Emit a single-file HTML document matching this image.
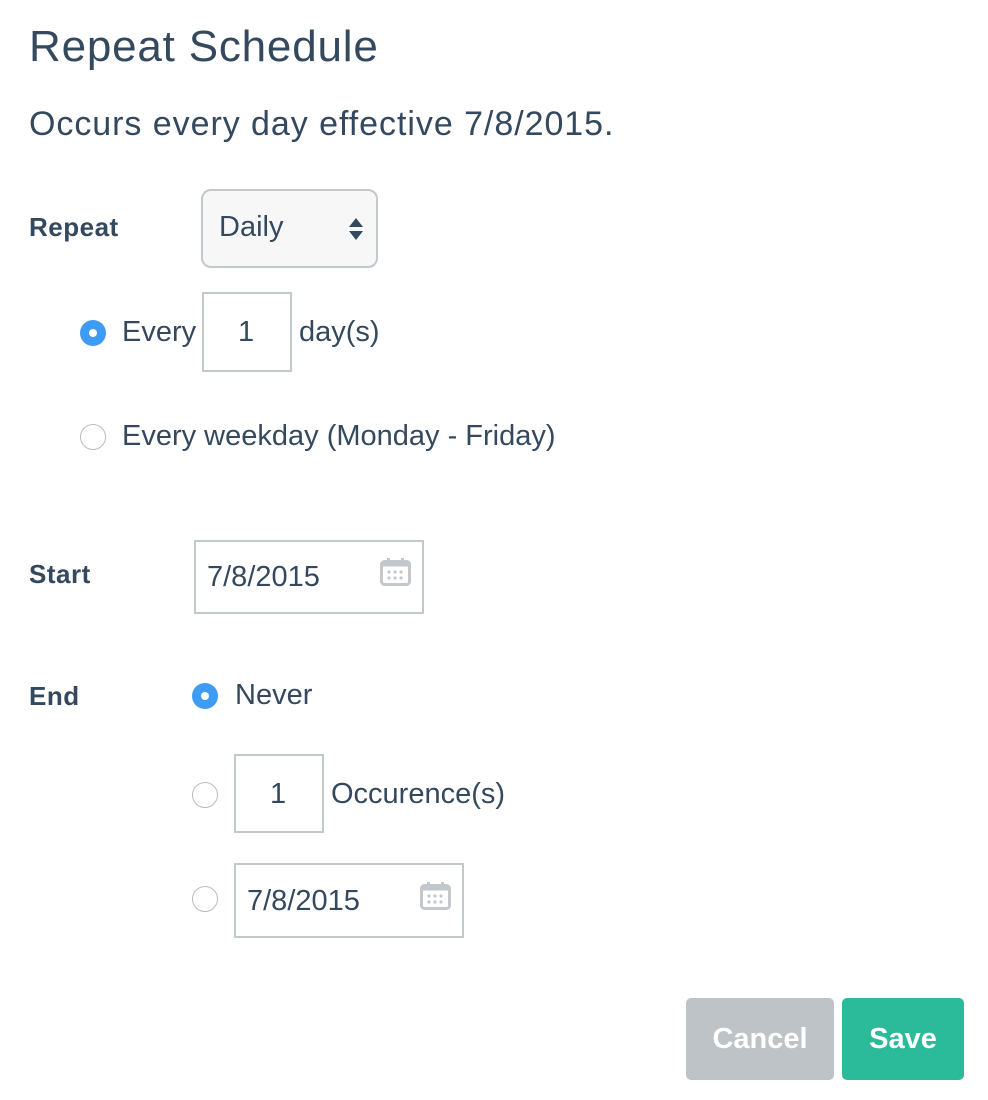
<!DOCTYPE html>
<html><head><style>
body{margin:0;width:988px;height:1100px;background:#fff;font-family:"Liberation Sans",sans-serif;color:#34495e;position:relative;overflow:hidden}
.a{position:absolute;white-space:nowrap}
.t{font-size:29px;line-height:1}
.b{font-weight:bold;font-size:26px;line-height:1;letter-spacing:0.5px}
.box{position:absolute;border:2px solid #c3c8cd;box-sizing:border-box;background:#fff}
.r{position:absolute;width:26px;height:26px;border-radius:50%;box-sizing:border-box;border:1px solid #b8bcc0;background:#fff}
.r.on{background:#3f9cf4;border:none}
.r.on:after{content:"";position:absolute;left:9px;top:9px;width:8px;height:8px;border-radius:50%;background:#fff}
.btn{position:absolute;border-radius:5px;color:#fff;font-weight:bold;font-size:29px;text-align:center}
</style></head><body>
<div class="a" style="left:29px;top:25px;font-size:44px;line-height:1;letter-spacing:0.8px">Repeat Schedule</div>
<div class="a" style="left:29px;top:107px;font-size:34px;line-height:1;letter-spacing:0.95px">Occurs every day effective 7/8/2015.</div>

<div class="a b" style="left:29px;top:214px">Repeat</div>
<div class="box" style="left:201px;top:189px;width:177px;height:79px;border-radius:10px;background:#f7f7f7"></div>
<div class="a t" style="left:219px;top:213px">Daily</div>
<svg class="a" style="left:348px;top:218px" width="16" height="24"><path d="M8 0L15 9H1Z M1 13H15L8 22Z" fill="#34495e"/></svg>

<div class="r on" style="left:80px;top:320px"></div>
<div class="a t" style="left:122px;top:318px">Every</div>
<div class="box" style="left:202px;top:292px;width:90px;height:80px"></div>
<div class="a t" style="left:238px;top:318px">1</div>
<div class="a t" style="left:299px;top:318px">day(s)</div>

<div class="r" style="left:80px;top:424px"></div>
<div class="a t" style="left:122px;top:422px">Every weekday (Monday - Friday)</div>

<div class="a b" style="left:29px;top:561px">Start</div>
<div class="box" style="left:194px;top:540px;width:230px;height:74px"></div>
<div class="a t" style="left:207px;top:563px">7/8/2015</div>
<svg class="a" style="left:380px;top:558px" width="31" height="28"><rect x="1.5" y="3.5" width="28" height="23" rx="3" fill="none" stroke="#c3c8cd" stroke-width="3"/><rect x="1.5" y="3.5" width="28" height="5" fill="#c3c8cd"/><rect x="7" y="0" width="3" height="6" fill="#c3c8cd"/><rect x="21" y="0" width="3" height="6" fill="#c3c8cd"/><g fill="#c3c8cd"><circle cx="9" cy="14" r="1.6"/><circle cx="15" cy="14" r="1.6"/><circle cx="21" cy="14" r="1.6"/><circle cx="9" cy="20" r="1.6"/><circle cx="15" cy="20" r="1.6"/><circle cx="21" cy="20" r="1.6"/></g></svg>

<div class="a b" style="left:29px;top:683px">End</div>
<div class="r on" style="left:192px;top:683px"></div>
<div class="a t" style="left:235px;top:681px">Never</div>

<div class="r" style="left:192px;top:782px"></div>
<div class="box" style="left:234px;top:754px;width:90px;height:79px"></div>
<div class="a t" style="left:270px;top:780px">1</div>
<div class="a t" style="left:331px;top:780px">Occurence(s)</div>

<div class="r" style="left:192px;top:886px"></div>
<div class="box" style="left:234px;top:863px;width:230px;height:75px"></div>
<div class="a t" style="left:247px;top:887px">7/8/2015</div>
<svg class="a" style="left:420px;top:882px" width="31" height="28"><rect x="1.5" y="3.5" width="28" height="23" rx="3" fill="none" stroke="#c3c8cd" stroke-width="3"/><rect x="1.5" y="3.5" width="28" height="5" fill="#c3c8cd"/><rect x="7" y="0" width="3" height="6" fill="#c3c8cd"/><rect x="21" y="0" width="3" height="6" fill="#c3c8cd"/><g fill="#c3c8cd"><circle cx="9" cy="14" r="1.6"/><circle cx="15" cy="14" r="1.6"/><circle cx="21" cy="14" r="1.6"/><circle cx="9" cy="20" r="1.6"/><circle cx="15" cy="20" r="1.6"/><circle cx="21" cy="20" r="1.6"/></g></svg>

<div class="btn" style="left:686px;top:998px;width:148px;height:82px;line-height:82px;background:#bdc3c7">Cancel</div>
<div class="btn" style="left:842px;top:998px;width:122px;height:82px;line-height:82px;background:#2bbb9a">Save</div>
</body></html>
